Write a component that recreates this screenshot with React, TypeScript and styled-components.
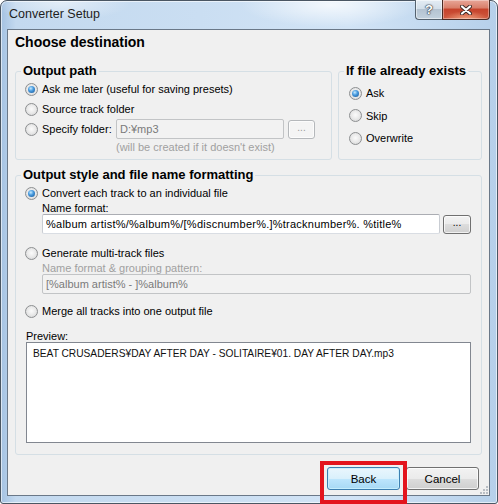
import React from 'react'
import styled, { createGlobalStyle } from 'styled-components'

const GlobalStyle = createGlobalStyle`
  html, body { margin: 0; padding: 0; }
  body {
    width: 498px;
    height: 504px;
    overflow: hidden;
    background: #ffffff;
    font-family: "Liberation Sans", Arial, sans-serif;
    font-size: 11px;
    color: #000;
  }
`

const App = () => {
  return (
    <>
      <GlobalStyle />
      <Window>
        <TitleBar>
          <Title>Converter Setup</Title>
          <Captions>
            <HelpButton>?</HelpButton>
            <CloseButton>
              <svg width="12" height="10" viewBox="0 0 12 10">
                <path d="M2 1.5 L10 8.5 M10 1.5 L2 8.5" stroke="#3b2a26" strokeWidth="4" strokeLinecap="round" />
                <path d="M2 1.5 L10 8.5 M10 1.5 L2 8.5" stroke="#ffffff" strokeWidth="2.2" strokeLinecap="round" />
              </svg>
            </CloseButton>
          </Captions>
        </TitleBar>

        <Client>
          <Heading>Choose destination</Heading>

          <TopGroups>
            <Group $grow>
              <Legend>Output path</Legend>
              <PathBody>
                <RadioRow>
                  <Radio $checked />
                  <span>Ask me later (useful for saving presets)</span>
                </RadioRow>
                <RadioRow>
                  <Radio />
                  <span>Source track folder</span>
                </RadioRow>
                <FolderGrid>
                  <RadioRow>
                    <Radio />
                    <span>Specify folder:</span>
                  </RadioRow>
                  <TextBox $disabled readOnly value="D:¥mp3" />
                  <SmallButton $disabled>...</SmallButton>
                  <Hint>(will be created if it doesn't exist)</Hint>
                </FolderGrid>
              </PathBody>
            </Group>

            <Group $width={144}>
              <Legend>If file already exists</Legend>
              <ExistsBody>
                <ExistsRow>
                  <Radio $checked />
                  <span>Ask</span>
                </ExistsRow>
                <ExistsRow>
                  <Radio />
                  <span>Skip</span>
                </ExistsRow>
                <ExistsRow>
                  <Radio />
                  <span>Overwrite</span>
                </ExistsRow>
              </ExistsBody>
            </Group>
          </TopGroups>

          <StyleGroup>
            <Legend>Output style and file name formatting</Legend>
            <StyleBody>
              <RadioRow>
                <Radio $checked />
                <span>Convert each track to an individual file</span>
              </RadioRow>
              <Indent>
                <SubLabel>Name format:</SubLabel>
                <InputRow>
                  <TextBox $spacing={0.24} readOnly value="%album artist%/%album%/[%discnumber%.]%tracknumber%. %title%" />
                  <SmallButton>...</SmallButton>
                </InputRow>
              </Indent>

              <RadioRow $top={9}>
                <Radio />
                <span>Generate multi-track files</span>
              </RadioRow>
              <Indent>
                <SubLabel $disabled>Name format &amp; grouping pattern:</SubLabel>
                <TextBox $disabled readOnly value="[%album artist% - ]%album%" />
              </Indent>

              <RadioRow $top={7}>
                <Radio />
                <span>Merge all tracks into one output file</span>
              </RadioRow>

              <PreviewLabel>Preview:</PreviewLabel>
              <PreviewBox>BEAT CRUSADERS¥DAY AFTER DAY - SOLITAIRE¥01. DAY AFTER DAY.mp3</PreviewBox>
            </StyleBody>
          </StyleGroup>

          <Footer>
            <PushButton $default>Back</PushButton>
            <PushButton>Cancel</PushButton>
          </Footer>

          <Grip>
            <svg width="8" height="8" viewBox="0 0 8 8">
              <rect x="6" y="0" width="2" height="2" fill="#b9bec4" />
              <rect x="3" y="3" width="2" height="2" fill="#b9bec4" />
              <rect x="6" y="3" width="2" height="2" fill="#b9bec4" />
              <rect x="0" y="6" width="2" height="2" fill="#b9bec4" />
              <rect x="3" y="6" width="2" height="2" fill="#b9bec4" />
              <rect x="6" y="6" width="2" height="2" fill="#b9bec4" />
            </svg>
          </Grip>
        </Client>

        <Highlight />
      </Window>
    </>
  )
}

export default App

const Window = styled.div`
position: relative;
width: 498px;
height: 504px;
box-sizing: border-box;
display: flex;
flex-direction: column;
border: 1px solid #4a5663;
border-radius: 7px 7px 3px 3px;
background:
  radial-gradient(ellipse 90px 22px at 330px 4px, rgba(255,255,255,0.75), rgba(255,255,255,0) 100%),
  radial-gradient(ellipse 70px 18px at 60px 2px, rgba(255,255,255,0.5), rgba(255,255,255,0) 100%),
  linear-gradient(90deg, #a4c2e2 0, #c3d9ef 3%, #cadef2 40%, #d2e4f6 70%, #b6d0ea 100%);
box-shadow: inset 0 0 0 1px rgba(255,255,255,0.6);
`

const TitleBar = styled.div`
height: 28px;
display: flex;
align-items: flex-start;
padding-left: 8px;
flex-shrink: 0;
`

const Title = styled.div`
font-size: 12.5px;
line-height: 26px;
color: #1e1e1e;
`

const Captions = styled.div`
display: flex;
margin-left: auto;
margin-right: 7px;
margin-top: -1px;
`

const HelpButton = styled.div`
width: 27px;
height: 20px;
box-sizing: border-box;
border: 1px solid #54626f;
border-right: none;
border-top: none;
border-radius: 0 0 0 4px;
background: linear-gradient(#e4ecf4 0, #d3dfea 45%, #b4c3d1 50%, #c2d1de 100%);
box-shadow: inset 0 0 0 1px rgba(255,255,255,0.5);
display: flex;
align-items: center;
justify-content: center;
font-weight: bold;
font-size: 13px;
color: #ffffff;
text-shadow: 0 0 1px #2c3540, 0 0 1px #2c3540, 0 0 2px #2c3540;
`

const CloseButton = styled.div`
width: 48px;
height: 20px;
box-sizing: border-box;
border: 1px solid #4a2b24;
border-top: none;
border-radius: 0 0 4px 0;
background:
  radial-gradient(ellipse 22px 8px at 50% 100%, rgba(255,190,150,0.7), rgba(255,190,150,0) 100%),
  linear-gradient(#e8a698 0, #d9806c 40%, #c6432c 50%, #cf5a40 100%);
box-shadow: inset 0 0 0 1px rgba(255,255,255,0.35);
display: flex;
align-items: center;
justify-content: center;
`

const Client = styled.div`
position: relative;
flex: 1;
margin: 0 7px 7px 6px;
border: 1px solid #6a7888;
background: #f0f0f0;
padding: 3px 7px 4px 7px;
display: flex;
flex-direction: column;
`

const Heading = styled.div`
font-weight: bold;
font-size: 14px;
line-height: 18px;
`

const TopGroups = styled.div`
display: flex;
gap: 6px;
margin-top: 13px;
`

const Group = styled.fieldset<{ $grow?: boolean; $width?: number }>`
margin: 0;
padding: 0;
min-width: 0;
border: 1px solid #d5dfe5;
border-radius: 3px;
${p => (p.$grow ? 'flex: 1;' : '')}
${p => (p.$width ? `width: ${p.$width}px; box-sizing: border-box; flex-shrink: 0;` : '')}
display: flex;
flex-direction: column;
`

const StyleGroup = styled(Group)`
margin-top: 8px;
`

const Legend = styled.legend`
font-weight: bold;
font-size: 13px;
line-height: 14px;
margin-left: 5px;
padding: 0 2px;
`

const PathBody = styled.div`
padding: 1px 8px 4px 9px;
`

const RadioRow = styled.div<{ $top?: number }>`
display: flex;
align-items: center;
gap: 4px;
height: 20px;
margin-top: ${p => p.$top || 0}px;
white-space: nowrap;
`

const Radio = styled.span<{ $checked?: boolean }>`
width: 13px;
height: 13px;
box-sizing: border-box;
border-radius: 50%;
border: 1px solid #8d8f91;
background: radial-gradient(circle at 50% 45%, #fbfbfb 0%, #e9e9e9 50%, #cfd0d1 100%);
display: flex;
align-items: center;
justify-content: center;
flex-shrink: 0;
&::after {
  content: '';
  display: ${p => (p.$checked ? 'block' : 'none')};
  width: 7px;
  height: 7px;
  border-radius: 50%;
  background: radial-gradient(circle at 40% 35%, #c6ebff 0%, #4a9ce0 40%, #12508f 100%);
}
`

const FolderGrid = styled.div`
display: grid;
grid-template-columns: 87px 168px 27px;
column-gap: 4px;
align-items: center;
`

const TextBox = styled.input<{ $disabled?: boolean; $spacing?: number }>`
box-sizing: border-box;
width: 100%;
height: 20px;
margin: 0;
padding: 0 3px;
font: 11px "Liberation Sans", Arial, sans-serif;
letter-spacing: ${p => p.$spacing || 0}px;
outline: none;
border: 1px solid;
border-radius: 2px;
border-color: ${p => (p.$disabled ? '#c2c4c6' : '#abadb3 #c9cdd3 #d9dde3 #c9cdd3')};
background: ${p => (p.$disabled ? '#f2f2f2' : '#ffffff')};
color: ${p => (p.$disabled ? '#7a7a7a' : '#000000')};
`

const SmallButton = styled.div<{ $disabled?: boolean }>`
box-sizing: border-box;
height: 19px;
border-radius: 3px;
border: 1px solid ${p => (p.$disabled ? '#b5b8bb' : '#707070')};
background: ${p =>
  p.$disabled
    ? '#f4f4f4'
    : 'linear-gradient(#f2f2f2, #ebebeb 50%, #dddddd 50%, #cfcfcf)'};
box-shadow: inset 0 0 0 1px rgba(255,255,255,0.7);
color: ${p => (p.$disabled ? '#9a9a9a' : '#000')};
font-size: 10px;
line-height: 14px;
display: flex;
justify-content: center;
`

const Hint = styled.div`
grid-column: 2 / 4;
line-height: 16px;
color: #a0a0a0;
white-space: nowrap;
`

const ExistsBody = styled.div`
padding: 4px 0 0 10px;
`

const ExistsRow = styled(RadioRow)`
height: 22.5px;
`

const StyleBody = styled.div`
padding: 1px 10px 11px 9px;
display: flex;
flex-direction: column;
`

const Indent = styled.div`
padding-left: 17px;
display: flex;
flex-direction: column;
`

const SubLabel = styled.div<{ $disabled?: boolean }>`
line-height: 11px;
height: 11px;
color: ${p => (p.$disabled ? '#a0a0a0' : '#000')};
`

const InputRow = styled.div`
display: flex;
align-items: center;
gap: 3px;
& > ${SmallButton} {
  width: 28px;
  flex-shrink: 0;
}
`

const PreviewLabel = styled.div`
margin: 10px 0 0 1px;
line-height: 11px;
height: 11px;
`

const PreviewBox = styled.div`
margin: 0 0 0 1px;
height: 101px;
box-sizing: border-box;
border: 1px solid #828790;
background: #ffffff;
padding: 4px 6px;
font-size: 10.2px;
line-height: 13px;
color: #111;
`

const Footer = styled.div`
display: flex;
justify-content: flex-end;
gap: 6px;
padding-right: 3px;
margin-top: 12px;
`

const PushButton = styled.div<{ $default?: boolean }>`
width: 73px;
height: 23px;
box-sizing: border-box;
border-radius: 3px;
border: 1px solid ${p => (p.$default ? '#3c7fb1' : '#707070')};
background: ${p =>
  p.$default
    ? 'linear-gradient(#eaf6fd, #d9f0fc 50%, #bee6fd 50%, #a7d9f5)'
    : 'linear-gradient(#f2f2f2, #ebebeb 50%, #dddddd 50%, #cfcfcf)'};
box-shadow: inset 0 0 0 1px ${p => (p.$default ? 'rgba(200,240,255,0.9)' : 'rgba(255,255,255,0.75)')};
display: flex;
align-items: center;
justify-content: center;
font-size: 11.5px;
`

const Grip = styled.div`
position: absolute;
right: 1px;
bottom: 1px;
width: 8px;
height: 8px;
display: flex;
`

const Highlight = styled.div`
position: absolute;
left: 319px;
top: 460px;
width: 87px;
height: 43px;
box-sizing: border-box;
border: 4px solid #e3141d;
`
